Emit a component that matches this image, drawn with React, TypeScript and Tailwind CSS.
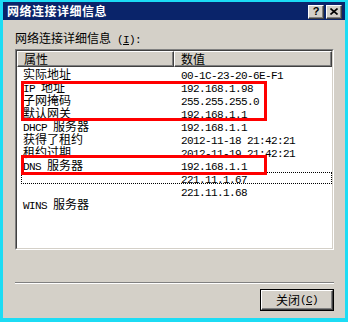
import React from "react";

const rows: [string, string][] = [
  ["实际地址", "00-1C-23-20-6E-F1"],
  ["IP 地址", "192.168.1.98"],
  ["子网掩码", "255.255.255.0"],
  ["默认网关", "192.168.1.1"],
  ["DHCP 服务器", "192.168.1.1"],
  ["获得了租约", "2012-11-18 21:42:21"],
  ["租约过期", "2012-11-19 21:42:21"],
  ["DNS 服务器", "192.168.1.1"],
  ["", "221.11.1.67"],
  ["", "221.11.1.68"],
  ["WINS 服务器", ""],
];

// ascii runs get the narrow mono face, the rest the CJK face
const Txt = ({ text }: { text: string }) => (
  <>
    {text.split(/([\x00-\x7f]+)/).filter(Boolean).map((part, i) =>
      /^[\x00-\x7f]+$/.test(part) ? (
        <span key={i} className="font-['Liberation_Mono',monospace] text-[11px] tracking-[-0.6px] whitespace-pre">
          {part}
        </span>
      ) : (
        <span key={i}>{part}</span>
      )
    )}
  </>
);

const CaptionButton = ({ children }: { children: React.ReactNode }) => (
  <div className="w-[16px] h-[14px] bg-[#d4d0c8] border border-t-white border-l-white border-b-[#404040] border-r-[#404040] shadow-[inset_-1px_-1px_0_#808080] flex items-center justify-center">
    {children}
  </div>
);

export default function App() {
  return (
    <div className="w-[348px] h-[322px] bg-[#1cdcf4] pt-[2px] px-[3px] pb-[4px] font-['Noto_Sans_CJK_SC',sans-serif] text-[12px] text-black">
      <div className="h-full flex flex-col bg-[#d4d0c8]">
        {/* title bar */}
        <div className="h-[18px] bg-[#0a246a] flex items-center pl-[4px] pr-[3px]">
          <span className="text-white font-bold text-[12px] leading-[14px] tracking-[0.5px]">网络连接详细信息</span>
          <div className="ml-auto flex gap-[2px] mt-[1px]">
            <CaptionButton>
              <span className="font-['Liberation_Sans',sans-serif] font-bold text-[11px] leading-none">?</span>
            </CaptionButton>
            <CaptionButton>
              <svg width="8" height="7" viewBox="0 0 8 7">
                <path d="M0.5 0.5 L7.5 6.5 M7.5 0.5 L0.5 6.5" stroke="black" strokeWidth="1.6" />
              </svg>
            </CaptionButton>
          </div>
        </div>

        <div className="flex-1 flex flex-col pl-[12px] pr-[11px]">
          <div className="mt-[11px] leading-[14px]">
            网络连接详细信息
            <span className="font-['Liberation_Mono',monospace] text-[11px] tracking-[-0.6px] whitespace-pre">
              {" ("}
              <span className="underline">I</span>
              {"):"}
            </span>
          </div>

          {/* list view */}
          <div className="relative mt-[2px] h-[201px] border border-t-[#808080] border-l-[#808080] border-b-white border-r-white">
            <div className="h-full bg-white border border-t-[#404040] border-l-[#404040] border-b-[#d4d0c8] border-r-[#d4d0c8]">
              <div className="flex h-[16px] bg-[#d4d0c8]">
                <div className="w-[157px] pl-[6px] leading-[14px] border border-t-white border-l-white border-b-[#404040] border-r-[#404040] shadow-[inset_-1px_-1px_0_#808080]">
                  属性
                </div>
                <div className="w-[158px] pl-[6px] leading-[14px] border border-t-white border-l-white border-b-[#404040] border-r-[#404040] shadow-[inset_-1px_-1px_0_#808080]">
                  数值
                </div>
              </div>
              {rows.map(([name, value], i) => (
                <div key={i} className="relative flex h-[13px] leading-[13px]">
                  <div className="w-[157px] pl-[6px] whitespace-nowrap">
                    <Txt text={name} />
                  </div>
                  <div className="pl-[7px] whitespace-nowrap">
                    <Txt text={value} />
                  </div>
                  {i === 8 && (
                    <div className="absolute left-[4px] right-0 top-[1px] bottom-0 border border-dotted border-black" />
                  )}
                </div>
              ))}
            </div>

            {/* red annotation boxes */}
            <div className="absolute left-[5px] top-[31px] w-[246px] h-[40px] border-[3px] border-[#ff0000]" />
            <div className="absolute left-[5px] top-[105px] w-[246px] h-[20px] border-[3px] border-[#ff0000]" />
          </div>

          <div className="mt-[32px] h-[2px] border-t border-t-[#808080] border-b border-b-white" />

          <div className="mt-[5px] flex justify-end">
            <div className="w-[74px] h-[22px] border border-black">
              <div className="h-full flex items-center justify-center border border-t-white border-l-white border-b-[#404040] border-r-[#404040] shadow-[inset_-1px_-1px_0_#808080] leading-[14px]">
                关闭
                <span className="font-['Liberation_Mono',monospace] text-[11px] tracking-[-0.6px]">
                  (<span className="underline">C</span>)
                </span>
              </div>
            </div>
          </div>
        </div>
      </div>
    </div>
  );
}
